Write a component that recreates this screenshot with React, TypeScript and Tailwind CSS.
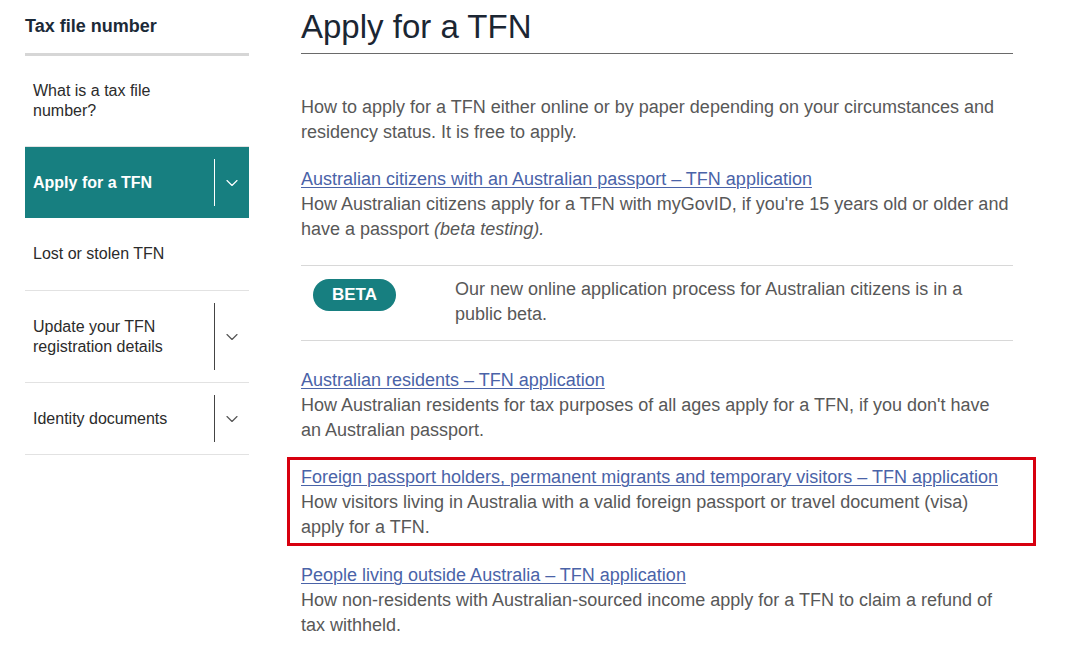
import { ChevronDown } from 'lucide-react';

interface NavItem {
  label: string;
  active?: boolean;
  expandable?: boolean;
  height: string;
}

const navItems: NavItem[] = [
  { label: 'What is a tax file number?', height: 'h-[91px]' },
  { label: 'Apply for a TFN', active: true, expandable: true, height: 'h-[71px]' },
  { label: 'Lost or stolen TFN', height: 'h-[73px]' },
  { label: 'Update your TFN registration details', expandable: true, height: 'h-[92px]' },
  { label: 'Identity documents', expandable: true, height: 'h-[72px]' },
];

const links = [
  {
    title: 'Australian residents – TFN application',
    desc: "How Australian residents for tax purposes of all ages apply for a TFN, if you don't have an Australian passport.",
  },
];

function Sidebar() {
  return (
    <aside className="w-[224px] shrink-0">
      <div className="pt-[14px] pb-[15px] border-b-[3px] border-[#d6d6d6]">
        <h2 className="text-[18px] leading-6 font-bold text-[#1c2a38]">Tax file number</h2>
      </div>
      <ul>
        {navItems.map((item) => (
          <li
            key={item.label}
            className={`${item.height} flex items-center ${
              item.active ? 'bg-[#177f80] text-white' : 'border-b border-[#e2e2e2] text-[#2b2b2b]'
            }`}
          >
            <span className={`flex-1 pl-2 pr-6 text-[16px] leading-5 ${item.active ? 'font-bold' : ''}`}>
              <span className="inline-block max-w-[150px]">{item.label}</span>
            </span>
            {item.expandable && (
              <div className="flex items-center h-full py-[12px]">
                <div className={`w-px h-full ${item.active ? 'bg-white' : 'bg-[#444]'}`} />
                <div className="w-[34px] flex justify-center">
                  <ChevronDown className={`w-[20px] h-[20px] ${item.active ? 'text-white' : 'text-[#555]'}`} strokeWidth={1.4} />
                </div>
              </div>
            )}
          </li>
        ))}
      </ul>
    </aside>
  );
}

function LinkBlock({ title, children }: { title: string; children: React.ReactNode }) {
  return (
    <div className="text-[18px] leading-[25px]">
      <a href="#" className="text-[#4a63a8] underline underline-offset-2 decoration-1">
        {title}
      </a>
      <p className="text-[#585858]">{children}</p>
    </div>
  );
}

export default function App() {
  return (
    <div className="bg-white w-[1080px] h-[657px] overflow-hidden flex gap-[52px] pl-[25px]" style={{ fontFamily: '"Liberation Sans", Arial, sans-serif' }}>
      <Sidebar />

      <main className="w-[712px]">
        {/* Header */}
        <div className="pt-[7px] pb-[6px] border-b border-[#6a6a6a]">
          <h1 className="text-[33px] leading-10 text-[#1b2633]">Apply for a TFN</h1>
        </div>

        <p className="mt-[41px] text-[18px] leading-[25px] text-[#585858]">
          How to apply for a TFN either online or by paper depending on your circumstances and residency status. It is free to apply.
        </p>

        <div className="mt-[22px]">
          <LinkBlock title="Australian citizens with an Australian passport – TFN application">
            How Australian citizens apply for a TFN with myGovID, if you're 15 years old or older and have a passport{' '}
            <em>(beta testing).</em>
          </LinkBlock>
        </div>

        {/* Beta notice */}
        <div className="mt-[23px] border-t border-b border-[#d8d8d8] flex items-start pt-[11px] pb-[13px]">
          <div className="w-[154px] shrink-0 pl-[12px] pt-[2px]">
            <span className="inline-flex items-center justify-center w-[83px] h-[32px] rounded-full bg-[#177f80] text-white font-bold text-[17px]">
              BETA
            </span>
          </div>
          <p className="text-[18px] leading-[25px] text-[#585858] pr-[30px]">
            Our new online application process for Australian citizens is in a public beta.
          </p>
        </div>

        <div className="mt-[27px]">
          {links.map((l) => (
            <LinkBlock key={l.title} title={l.title}>
              {l.desc}
            </LinkBlock>
          ))}
        </div>

        <div className="mt-[14px] -ml-[14px] w-[749px] border-[3px] border-[#d7000f] pl-[11px] pr-[20px] pt-[5px] pb-[3px]">
          <LinkBlock title="Foreign passport holders, permanent migrants and temporary visitors – TFN application">
            How visitors living in Australia with a valid foreign passport or travel document (visa) apply for a TFN.
          </LinkBlock>
        </div>

        <div className="mt-[17px]">
          <LinkBlock title="People living outside Australia – TFN application">
            How non-residents with Australian-sourced income apply for a TFN to claim a refund of tax withheld.
          </LinkBlock>
        </div>
      </main>
    </div>
  );
}
